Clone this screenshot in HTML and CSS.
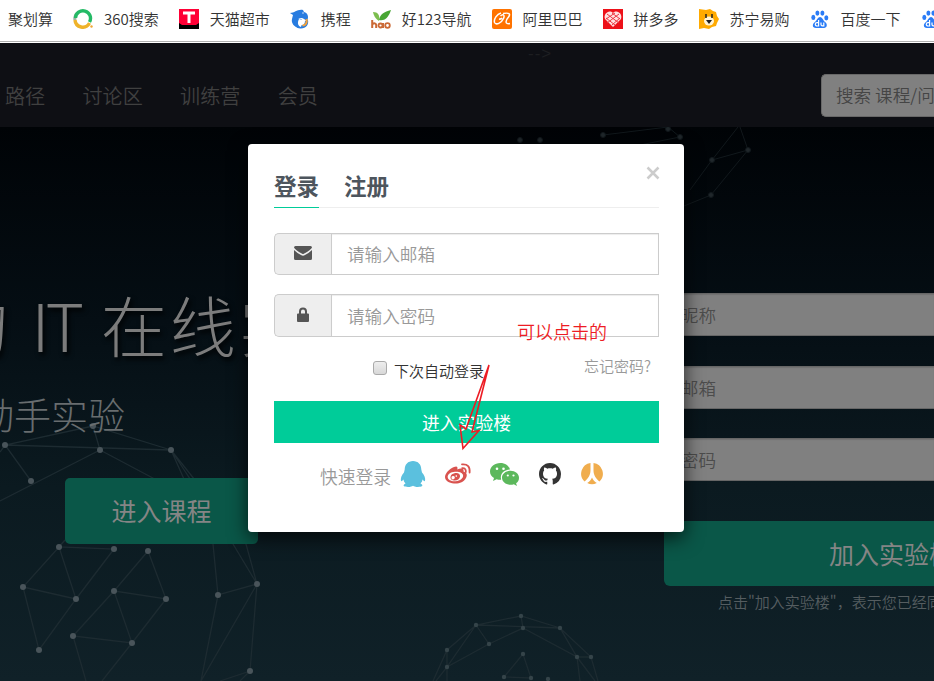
FILE: index.html
```html
<!DOCTYPE html>
<html lang="zh-CN">
<head>
    <meta charset="UTF-8">
    <meta name="viewport" content="width=device-width, initial-scale=1.0">
    <title>实验楼</title>
    <link rel="stylesheet" href="styles.css">
</head>
<body>
    <!-- Bookmarks -->
    <div class="bookmarks">
        <a class="bookmark">聚划算</a>
        <a class="bookmark">
            <svg viewBox="0 0 20 20"><path d="M1.900 11a8 8 0 0 1 4-8" fill="none" stroke="#9dafa0" stroke-width="3"/><path d="M2.500 9A7.500 7.500 0 1 1 16.500 13" fill="none" stroke="#24ba66" stroke-width="3.400"/><path d="M2 11A7.700 7.700 0 0 0 16.500 14" fill="none" stroke="#efb32a" stroke-width="3.400"/><circle cx="18.500" cy="17.500" r="1.200" fill="#efa735"/></svg>
            360搜索
        </a>
        <a class="bookmark">
            <svg viewBox="0 0 20 20"><path d="M0 0h20v20H0z" fill="#ff0036"/><path d="M0 14l3 2h14l3-2v6H0z" fill="#000"/><path d="M4 4h12M10 4v10" stroke="#fff" stroke-width="3"/></svg>
            天猫超市
        </a>
        <a class="bookmark">
            <svg viewBox="0 0 20 20"><path d="M0 4C5 4 7 0 13 1l1 2c4 1 5 5 3 9l-3-2c-2-2-5-1-7 1-1 3 0 6 2 8-5-1-8-5-7-9l1-4z" fill="#287ce0"/><path d="M5 10c-2 5 1 10 6 9.500 5 0 8-4 7-8.500l-3 1c0 3-2 5-4 4s-1-3 1-6z" fill="#287ce0"/><path d="M9 10c-2 4-1 7 2 8 1-3 0-4 2-7" fill="#fff"/><path d="M16.500 10c1 4-1 6.500-4 6.500" fill="none" stroke="#f5a136" stroke-width="2"/><circle cx="13" cy="4" r=".7" fill="#fff"/></svg>
            携程
        </a>
        <a class="bookmark">
            <svg viewBox="0 0 20 20"><path d="M2 3c5 0 7 3 6 9C4 9 3 7 2 3z" fill="#7cbd4e"/><path d="M20 1c-3 9-7 11-12 10C9 5 13 3 20 1z" fill="#48a634"/><path d="M1.200 11v8M1.200 15.500c2-2 4-1 4 .5v3M12 14v5" fill="none" stroke="#cb6a36" stroke-width="2"/><circle cx="9.500" cy="16.500" r="2" fill="none" stroke="#cb6a36" stroke-width="1.800"/><circle cx="16.500" cy="16.500" r="2.300" fill="none" stroke="#cb6a36" stroke-width="1.800"/></svg>
            好123导航
        </a>
        <a class="bookmark">
            <svg viewBox="0 0 20 20"><rect width="20" height="20" rx="2" fill="#ff7300"/><path d="M9 4C5 5 1.500 10 2.500 13.500c1.500 3 7 .5 9-4C13 6 11 4.500 8.500 7M7 10c2 .5 3-1 3-1M11 4.500c6-1 8 0 5.500 3.500-3 3.500-4 7.500 1.500 6.500" fill="none" stroke="#fff" stroke-width="1.500"/></svg>
            阿里巴巴
        </a>
        <a class="bookmark">
            <svg viewBox="0 0 20 20"><path d="M0 0h20v20H0z" fill="#ed1119"/><path d="M10 18L2 10C0 5 6 0 10 4c4-4 10 1 8 6z" fill="#ffe1e1"/><path d="M4 5l12 9M3 9l9 7M9 4l8 6M16 5L4 14M12 4L3 10M17 9l-8 7" stroke="#ed3540" stroke-width="1"/></svg>
            拼多多
        </a>
        <a class="bookmark">
            <svg viewBox="0 0 20 20"><path d="M0 0l7 1 4-1 3 2 3 1 1 4 2 3-2 4-1 3-4 1-3 2-5-1-5 1z" fill="#ffaa00"/><ellipse cx="10" cy="12" rx="5" ry="4.500" fill="#fff4d7"/><path d="M7 5v4M13 5v4" stroke="#222" stroke-width="1.500"/><path d="M7 11h6l-3 4z" fill="#222"/></svg>
            苏宁易购
        </a>
        <a class="bookmark">
            <svg viewBox="0 0 20 20"><use href="#paw"/></svg>
            百度一下
        </a>
        <a class="bookmark">
            <svg viewBox="0 0 20 20"><g id="paw"><g fill="#2b7cf6"><ellipse cx="3.300" cy="8.400" rx="2" ry="2.600"/><ellipse cx="7.400" cy="4.100" rx="2" ry="2.700"/><ellipse cx="12.400" cy="4.100" rx="2" ry="2.700"/><ellipse cx="16.300" cy="8.800" rx="2" ry="2.600"/><path d="M10 8c2 0 3 3 5 5 3 2 2 6-1 6H6c-4 0-4-4-1-6 2-2 3-5 5-5z"/></g><path d="M8.600 11v6H7a1.500 1.500 0 0 1 0-3.400h1.600M11 13.500v2q0 1.500 2.800 1.400v-3.400" fill="none" stroke="#fff" stroke-width="1.200"/></g></svg>
        </a>
    </div>

    <div class="page">
        <!-- Header -->
        <div class="header">
            <span class="comment-end">--&gt;</span>
            <div class="nav">
                <a>路径</a>
                <a>讨论区</a>
                <a>训练营</a>
                <a>会员</a>
            </div>
            <div class="search">搜索 课程/问答</div>
        </div>

        <!-- Hero -->
        <div class="hero">
            <svg class="network" viewBox="0 127 934 554">
                <g class="lines">
                    <path d="M0 452L5 445L93 426L171 450L5 445L31 481M93 426L100 450L0 501M100 450L200 503M171 450L213 544L218 595L257 584L233 544L171 450L246 544L257 584L250 671L220 681M257 584L201 681L218 595M250 671L240 681"/>
                    <path d="M65 540L59 547L114 549L76 599L59 547L23 587L76 599L39 650L23 587M148 551L166 599L114 591L148 551M114 591L73 636L132 643L114 591M166 599L132 643L102 681M73 636L86 681"/>
                </g>
                <g class="dots">
                    <circle cx="5" cy="445" r="3"/><circle cx="93" cy="426" r="3"/><circle cx="100" cy="450" r="3"/><circle cx="171" cy="450" r="3"/><circle cx="31" cy="481" r="3"/>
                    <circle cx="59" cy="547" r="3"/><circle cx="114" cy="549" r="3"/><circle cx="148" cy="551" r="3"/><circle cx="23" cy="587" r="3"/><circle cx="76" cy="599" r="3"/>
                    <circle cx="114" cy="591" r="3"/><circle cx="166" cy="599" r="3"/><circle cx="39" cy="650" r="3"/><circle cx="73" cy="636" r="3"/><circle cx="132" cy="643" r="3"/>
                    <circle cx="257" cy="584" r="3"/><circle cx="218" cy="595" r="3"/><circle cx="250" cy="671" r="3"/>
                </g>
                <g class="lines">
                    <path d="M433 681L447 650L476 625L521 616L560 628L591 657L598 681M476 625L560 628L577 657L591 657M521 616L523 628L489 644L447 667L436 681M476 625L489 644M476 625L447 667V681M447 650V667M523 628L577 657L580 681M577 657L595 681M523 654L504 677L531 678Z"/>
                </g>
                <g class="dots small">
                    <circle cx="521" cy="616" r="2.200"/><circle cx="476" cy="625" r="2.200"/><circle cx="523" cy="628" r="2.200"/><circle cx="560" cy="628" r="2.200"/><circle cx="489" cy="644" r="2.200"/><circle cx="447" cy="650" r="2.200"/><circle cx="447" cy="667" r="2.200"/><circle cx="577" cy="657" r="2.200"/><circle cx="591" cy="657" r="2.200"/><circle cx="523" cy="654" r="2.200"/><circle cx="504" cy="677" r="2.200"/><circle cx="531" cy="678" r="2.200"/><circle cx="548" cy="679" r="2.200"/>
                </g>
                <g class="far">
                    <path d="M603 135L668 127L680 137L640 145M740 127L748 150L712 160L738 127M748 150L711 195L684 206M712 160L690 190"/>
                    <circle cx="520" cy="140" r="2.500"/><circle cx="540" cy="140" r="2.500"/><circle cx="603" cy="135" r="2.500"/><circle cx="668" cy="129" r="2.500"/><circle cx="680" cy="137" r="2.500"/><circle cx="748" cy="150" r="2.500"/><circle cx="712" cy="160" r="2.500"/><circle cx="711" cy="195" r="2.500"/>
                </g>
            </svg>
            <div class="intro">
                <div class="title">的 <span>IT</span> 在线实</div>
                <div class="subtitle">动手实验</div>
                <div class="btn course-btn">进入课程</div>
            </div>
            <div class="join">
                <div class="join-input">请输入昵称</div>
                <div class="join-input">请输入邮箱</div>
                <div class="join-input">请输入密码</div>
                <div class="btn join-btn">加入实验楼</div>
                <div class="terms">点击"加入实验楼"，表示您已经同意</div>
            </div>
        </div>
    </div>

    <!-- Login dialog -->
    <div class="modal">
        <svg class="close" viewBox="0 0 14 14"><path d="M1.500 1.500l11 11M12.500 1.500l-11 11"/></svg>
        <div class="tabs">
            <div class="tab active">登录</div>
            <div class="tab">注册</div>
        </div>
        <div class="input-group">
            <div class="addon"><svg width="18" height="14" viewBox="0 0 18 14"><path d="M1.500 0h15Q18 0 18 1.500 17 4 9.800 7.800q-.8.5-1.600 0Q1 4 0 1.500 0 0 1.500 0zM0 4q3 3 7 5 2 1.300 4 0 4-2 7-5v8.500q0 1.500-1.500 1.500h-15Q0 14 0 12.500z"/></svg></div>
            <div class="input">请输入邮箱</div>
        </div>
        <div class="input-group password">
            <div class="addon"><svg width="12" height="15" viewBox="0 0 12 15"><path d="M1 6.500h1V4.500a4 4 0 0 1 8 0v2h1q1 0 1 1V14q0 1-1 1H1q-1 0-1-1V7.500q0-1 1-1zM4 6.500h4v-2a2 2 0 0 0-4 0z"/></svg></div>
            <div class="input">请输入密码</div>
        </div>
        <div class="options">
            <span class="checkbox"></span>
            <span class="remember">下次自动登录</span>
            <a class="forgot">忘记密码?</a>
        </div>
        <div class="submit">进入实验楼</div>
        <div class="quick">
            <span>快速登录</span>
            <svg class="qq" viewBox="0 0 26 26"><path d="M13 0c5 0 8.300 3.500 8.300 8.500 0 1 .7 2 .7 3 2.300 2.500 3.800 6 3 8.300-.6 1-1.700-.2-2.400-1.200-.3 1.600-1 2.900-2.100 4 4 2.200 1 3.400-2.500 3.400-2.500 0-4-.7-5-1.300-1 .6-2.500 1.300-5 1.300-3.500 0-6.500-1.200-2.500-3.400-1.100-1.100-1.800-2.400-2.100-4C2.700 19.600 1.600 20.800 1 19.800c-.8-2.300.7-5.800 3-8.300 0-1 .7-2 .7-3C4.700 3.500 8 0 13 0z"/></svg>
            <svg class="weibo" viewBox="0 0 26 22"><path fill-rule="evenodd" d="M9 4c3-1.500 4 0 3.300 2.500 3-1.300 7-1.600 6.200 2 3 .8 4.200 3.400 2.600 6.300C18.700 19.500 13.500 21 9 20.500 4 20 0 17.700 0 14 0 10.500 4.500 5.800 9 4zm1 4.800C5.500 9 2.500 11.500 2.700 14.300c.3 2.700 3.700 4.300 8 3.900 4.500-.4 7.700-3.200 7.400-5.800C17.800 9.900 14.300 8.400 10 8.800zM9.500 10.200c3.400-.6 6 1.100 5.500 3.600-.4 2.200-2.500 3.800-5.100 3.800-3 0-4.900-1.900-4.300-4.200.4-1.700 2-2.900 3.900-3.200zM8.500 13a1.700 1.700 0 1 0 .1 3.300A1.700 1.700 0 0 0 8.500 13zM11.500 12.300a.8.8 0 1 0 .1 1.500.8.8 0 0 0-.1-1.500z"/><path d="M17.200 5.200q4-.4 3.600 4M17 1.400q8.500-.8 7.600 8.300" class="wave"/></svg>
            <svg class="wechat" viewBox="0 0 29 25"><path d="M10.300 1C4.600 1 0 4.700 0 9.500c0 2.700 1.500 5 4 6.500L3 19l3.600-1.800q2 .6 4.600.5C9.500 12 14 7.700 20 7.500 19 3.700 15 1 10.300 1z"/><path d="M20.500 8.800c-4.700 0-8.500 3.100-8.500 7s3.800 7 8.500 7q1.900 0 3.300-.5L27 24l-.9-2.700c1.900-1.300 2.900-3.200 2.900-5.500 0-3.900-3.800-7-8.500-7z"/><g fill="#fff"><circle cx="7" cy="6.700" r="1.300"/><circle cx="13.500" cy="6.700" r="1.300"/><circle cx="17.800" cy="13.500" r="1.100"/><circle cx="23.500" cy="13.500" r="1.100"/></g></svg>
            <svg class="github" viewBox="0 0 16 16"><path d="M8 0C3.580 0 0 3.580 0 8c0 3.540 2.290 6.530 5.470 7.590.4.070.55-.17.55-.38 0-.19-.01-.82-.01-1.490-2.010.37-2.530-.49-2.690-.94-.09-.23-.48-.94-.82-1.130-.28-.15-.68-.52-.01-.53.63-.01 1.080.58 1.230.82.720 1.210 1.870.87 2.330.66.070-.52.28-.87.51-1.070-1.780-.2-3.640-.89-3.640-3.950 0-.87.31-1.590.82-2.150-.08-.2-.36-1.020.08-2.120 0 0 .67-.21 2.200.82.640-.18 1.320-.27 2-.27s1.360.09 2 .27c1.530-1.040 2.200-.82 2.200-.82.44 1.100.16 1.920.08 2.120.51.56.82 1.270.82 2.150 0 3.070-1.870 3.750-3.650 3.950.29.25.54.73.54 1.480 0 1.070-.01 1.930-.01 2.200 0 .21.15.46.55.38A8.010 8.010 0 0 0 16 8c0-4.420-3.580-8-8-8z"/></svg>
            <svg class="renren" viewBox="0 0 22 22"><path d="M9.500 0v7.500c0 4.500-2.500 8.500-6 11A10.800 10.800 0 0 1 9.500 0zM12.500 0v7.500c0 4.500 2.500 8.500 6 11A10.800 10.800 0 0 0 12.500 0zM11 14.500c1 2.300 2.700 4.300 4.800 5.600a10.600 10.600 0 0 1-9.600 0C8.300 18.800 10 16.800 11 14.500z"/></svg>
        </div>
    </div>

    <!-- Note -->
    <div class="note">可以点击的</div>
    <svg class="arrow" viewBox="455 360 40 94"><path d="M489 365L466 429L460 425L463 448.500L479 430.500L472 432Z"/></svg>
</body>
</html>
```
FILE: styles.css
```css
* {
    box-sizing: border-box;
}
body {
    margin: 0;
    width: 934px;
    height: 681px;
    position: relative;
    overflow: hidden;
    background-color: #fff;
    font-family: "Noto Sans CJK SC", sans-serif;
    font-weight: 350;
}
svg {
    flex: none;
    display: block;
}
/* Bookmarks */
.bookmarks {
    display: flex;
    gap: 20.2px;
    height: 42px;
    padding: 0 0 3px 8px;
    border-bottom: 1px solid #b0b0b0;
    font-size: 15px;
    line-height: 37px;
    color: #333;
}
.bookmark {
    display: flex;
    align-items: flex-start;
    gap: 10.8px;
    white-space: nowrap;
}
.bookmark svg {
    width: 20px;
    height: 20px;
    margin-top: 9px;
}
/* Page */
.page {
    margin-top: 1px;
}
.header {
    display: flex;
    justify-content: space-between;
    height: 84px;
    padding: 31px 0 0 5px;
    background-color: #0e0f14;
    position: relative;
}
.comment-end {
    position: absolute;
    left: 528px;
    top: 1px;
    font-family: "Liberation Sans", sans-serif;
    font-size: 17px;
    letter-spacing: 1px;
    color: #1d1e21;
}
.nav {
    display: flex;
    gap: 37.3px;
    font-size: 20.1px;
    line-height: 43px;
    color: #404040;
}
.search {
    width: 113px;
    height: 43px;
    padding-left: 14px;
    border: 1px solid #686868;
    border-right: 0;
    border-radius: 5px 0 0 5px;
    background-color: #808080;
    font-size: 17.6px;
    line-height: 39px;
    color: #454545;
    white-space: nowrap;
    overflow: hidden;
}
/* Hero */
.hero {
    display: flex;
    justify-content: space-between;
    height: 554px;
    background: linear-gradient(#000306, #050e14 35%, #0b1a20 65%, #102128);
    position: relative;
}
.network {
    position: absolute;
    left: 0;
    top: 0;
    width: 934px;
    height: 554px;
}
.lines {
    fill: none;
    stroke: #1d2b31;
    stroke-width: 1.3;
}
.dots {
    fill: #49545a;
}
.dots.small {
    fill: #354449;
}
.far {
    fill: #20272b;
    stroke: #11181c;
}
.far path {
    fill: none;
}
.intro {
    padding-top: 147px;
    width: 400px;
    position: relative;
}
.title {
    margin-left: -57px;
    font-size: 66px;
    font-weight: 300;
    letter-spacing: 3px;
    line-height: 99px;
    color: #7c7c7c;
    white-space: nowrap;
    text-shadow: 2px 3px 5px #000;
}
.title span {
    margin: 0 3px 0 2px;
    letter-spacing: -4px;
}
.subtitle {
    margin: 3px 0 0 -23px;
    font-size: 37px;
    font-weight: 300;
    line-height: 76px;
    color: #686d6f;
}
.btn {
    border-radius: 5px;
    background-color: #0a5748;
    font-size: 25px;
    font-weight: 400;
    text-align: center;
    color: #858585;
    white-space: nowrap;
}
.course-btn {
    width: 193px;
    height: 66px;
    margin: 26px 0 0 65px;
    line-height: 64px;
}
.join {
    width: 322px;
    padding-top: 166px;
    position: relative;
}
.join-input {
    height: 43px;
    margin-bottom: 29.5px;
    padding-left: 15px;
    border: 1px solid #666;
    border-right: 0;
    background-color: #808080;
    box-shadow: inset 0 1px 1px #707070;
    font-size: 17.6px;
    line-height: 41px;
    color: #4c4c4c;
}
.join-btn {
    height: 65px;
    margin: 40px 0 0 52px;
    padding-left: 165px;
    border-radius: 6px 0 0 6px;
    line-height: 65px;
    text-align: left;
    overflow: hidden;
}
.terms {
    margin-left: 106px;
    font-size: 15px;
    line-height: 32px;
    color: #555d60;
    white-space: nowrap;
    overflow: hidden;
}
/* Login dialog */
.modal {
    position: absolute;
    left: 248px;
    top: 144px;
    width: 436px;
    height: 388px;
    padding: 17px 25px 0 26px;
    border-radius: 4px;
    background-color: #fff;
    box-shadow: 0 6px 19px rgba(0, 0, 0, 0.7);
}
.close {
    position: absolute;
    right: 24px;
    top: 22px;
    width: 14px;
    height: 14px;
    stroke: #ccc;
    stroke-width: 2.5;
}
.tabs {
    display: flex;
    gap: 25px;
    height: 47px;
    border-bottom: 1px solid #eee;
    font-size: 22.5px;
    font-weight: 700;
    line-height: 48px;
    color: #4d555d;
}
.tab {
    height: 47px;
}
.tab.active {
    border-bottom: 1px solid #0c9;
}
.input-group {
    display: flex;
    height: 42px;
    margin-top: 25px;
}
.input-group.password {
    height: 43px;
    margin-top: 19px;
}
.addon {
    display: flex;
    align-items: center;
    justify-content: center;
    width: 57px;
    border: 1px solid #ccc;
    border-right: 0;
    border-radius: 5px 0 0 5px;
    background-color: #eee;
    fill: #555;
}
.addon svg {
    margin-bottom: 2px;
}
.input {
    flex: 1;
    padding-left: 15px;
    border: 1px solid #ccc;
    box-shadow: inset 0 1px 1px rgba(0, 0, 0, 0.075);
    font-size: 17.6px;
    line-height: 40px;
    color: #999;
}
.password .input {
    line-height: 42px;
}
.options {
    display: flex;
    align-items: center;
    height: 64px;
    padding: 0 8px 0 99px;
    font-size: 15px;
    color: #333;
}
.checkbox {
    width: 14px;
    height: 14px;
    margin: 0 7px 2px 0;
    border: 1px solid #aaa;
    border-radius: 3px;
    background: linear-gradient(#eee, #d8d8d8);
}
.remember {
    padding-top: 2px;
}
.forgot {
    margin-left: auto;
    padding-bottom: 7px;
    color: #999;
}
.submit {
    height: 42px;
    background-color: #0c9;
    font-size: 17.8px;
    font-weight: 400;
    line-height: 42px;
    text-align: center;
    color: #fff;
}
.quick {
    display: flex;
    align-items: center;
    height: 62px;
    padding-left: 46px;
    font-size: 17.8px;
    color: #999;
}
.quick span {
    padding-top: 4px;
}
.qq {
    width: 26px;
    height: 26px;
    margin-left: 9px;
    fill: #5bc0de;
}
.weibo {
    width: 26px;
    height: 22px;
    margin-left: 19px;
    fill: #d9534f;
}
.weibo .wave {
    fill: none;
    stroke: #d9534f;
    stroke-width: 1.8;
    stroke-linecap: round;
}
.wechat {
    width: 29px;
    height: 25px;
    margin-left: 19px;
    fill: #5cb85c;
}
.github {
    width: 22px;
    height: 22px;
    margin-left: 20px;
    fill: #333;
}
.renren {
    width: 22px;
    height: 22px;
    margin-left: 20px;
    fill: #f0ad4e;
}
/* Note */
.note {
    position: absolute;
    left: 517px;
    top: 318px;
    font-size: 18px;
    line-height: 26px;
    color: #ed1c24;
}
.arrow {
    position: absolute;
    left: 455px;
    top: 360px;
    width: 40px;
    height: 94px;
    fill: none;
    stroke: #ed1c24;
    stroke-width: 1.6;
}
```
